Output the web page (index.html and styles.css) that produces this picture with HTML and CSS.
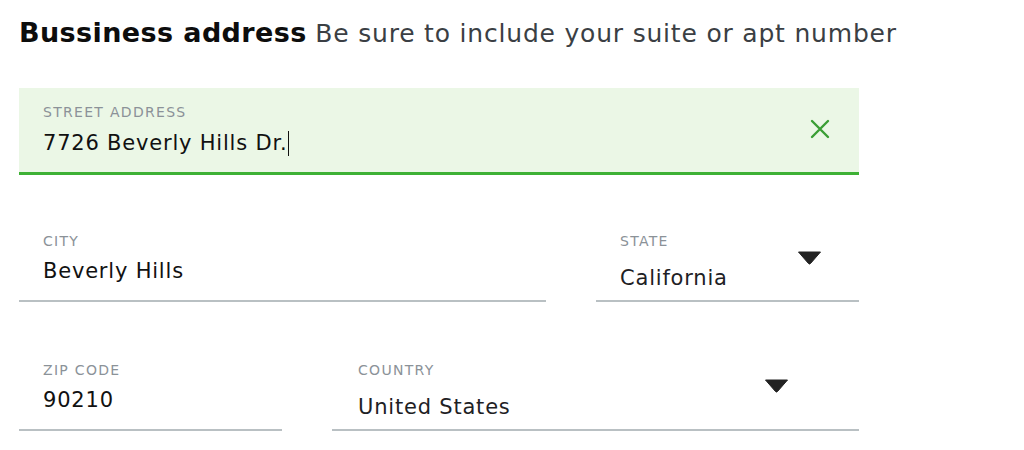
FILE: index.html
```html
<!DOCTYPE html>
<html>
<head>
<meta charset="utf-8">
<link rel="stylesheet" href="styles.css">
</head>
<body>
<div class="page">
  <h1 class="title"><span class="title-strong">Bussiness address</span> <span class="title-hint">Be sure to include your suite or apt number</span></h1>
  <div class="form">
    <div class="field field-active">
      <div class="field-main">
        <div class="label">STREET ADDRESS</div>
        <div class="value">7726 Beverly Hills Dr.<span class="caret"></span></div>
      </div>
      <svg class="clear-icon" width="20" height="20" viewBox="0 0 20 20"><path d="M2 2 L18 18 M18 2 L2 18" stroke="#3a9e34" stroke-width="2.4" stroke-linecap="round" fill="none"/></svg>
    </div>
    <div class="row row-wide-first">
      <div class="field">
        <div class="field-main">
          <div class="label">CITY</div>
          <div class="value">Beverly Hills</div>
        </div>
      </div>
      <div class="field">
        <div class="field-main">
          <div class="label">STATE</div>
          <div class="value value-select">California</div>
        </div>
        <svg class="arrow arrow-state" width="25" height="14" viewBox="0 0 25 14"><path d="M1.5 1 L23.5 1 L13.5 12.5 Q12.5 13.6 11.5 12.5 Z" fill="#222" stroke="#222" stroke-width="1" stroke-linejoin="round"/></svg>
      </div>
    </div>
    <div class="row row-wide-last">
      <div class="field">
        <div class="field-main">
          <div class="label">ZIP CODE</div>
          <div class="value">90210</div>
        </div>
      </div>
      <div class="field field-country">
        <div class="field-main">
          <div class="label">COUNTRY</div>
          <div class="value value-select">United States</div>
        </div>
        <svg class="arrow arrow-country" width="25" height="14" viewBox="0 0 25 14"><path d="M1.5 1 L23.5 1 L13.5 12.5 Q12.5 13.6 11.5 12.5 Z" fill="#222" stroke="#222" stroke-width="1" stroke-linejoin="round"/></svg>
      </div>
    </div>
  </div>
</div>
</body>
</html>
```
FILE: styles.css
```css
html, body {
  margin: 0;
  padding: 0;
  background: #ffffff;
}
body {
  font-family: "DejaVu Sans", "Liberation Sans", sans-serif;
  color: #111;
}
.page {
  padding: 16px 0 0 19px;
  width: 840px;
}
.title {
  margin: 0;
  font-size: 27px;
  line-height: 34px;
  font-weight: normal;
  white-space: nowrap;
}
.title-strong {
  font-weight: bold;
  color: #0d0d0d;
  letter-spacing: 0.4px;
}
.title-hint {
  font-size: 25px;
  color: #3b3f44;
  letter-spacing: 0.8px;
}
.form {
  margin-top: 37px;
  display: flex;
  flex-direction: column;
}
.row {
  display: grid;
  column-gap: 50px;
}
.row-wide-first {
  margin-top: 40px;
  grid-template-columns: 527px 263px;
}
.row-wide-last {
  margin-top: 42px;
  grid-template-columns: 263px 527px;
}
.field {
  display: flex;
  height: 87px;
  box-sizing: border-box;
  padding: 18px 0 0 24px;
  border-bottom: 2px solid #b9c0c3;
}
.field-country {
  padding-left: 26px;
}
.field-active {
  padding-top: 16px;
  background: #ebf7e6;
  border-bottom: 3px solid #3eb135;
}
.field-main {
  flex: 1;
  display: flex;
  flex-direction: column;
}
.label {
  font-size: 14px;
  line-height: 16px;
  color: #8b9298;
  letter-spacing: 1.3px;
}
.value {
  margin-top: 9px;
  font-size: 21px;
  line-height: 26px;
  color: #111;
  letter-spacing: 0.8px;
  display: flex;
  align-items: center;
}
.field-active .value {
  margin-top: 10px;
}
.value-select {
  margin-top: 16px;
  color: #1e2124;
}
.caret {
  display: inline-block;
  width: 1px;
  height: 25px;
  background: #111;
  margin-left: 1px;
}
.clear-icon {
  margin: 15px 29px 0 0;
}
.arrow-state {
  margin-top: 18px;
  margin-right: 37px;
}
.arrow-country {
  margin-top: 17px;
  margin-right: 70px;
}
```
